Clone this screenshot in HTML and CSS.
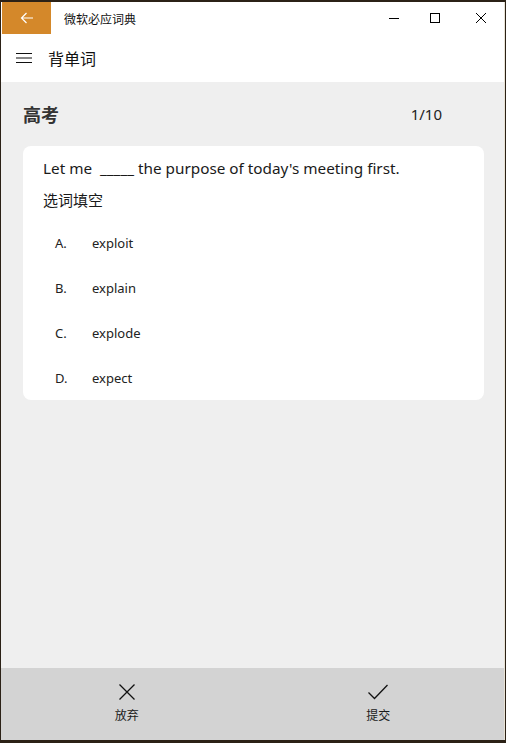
FILE: index.html
```html
<!DOCTYPE html>
<html lang="zh">
<head>
<meta charset="utf-8">
<title>微软必应词典</title>
<link rel="stylesheet" href="styles.css">
</head>
<body>
<div class="window">
  <div class="titlebar">
    <div class="back">
      <svg width="14" height="12" viewBox="0 0 14 12"><path d="M13 6H1.5M6.5 1L1.5 6l5 5" fill="none" stroke="#fff" stroke-width="1.2"/></svg>
    </div>
    <div class="apptitle">微软必应词典</div>
    <div class="controls">
      <span class="ctl ctl-min"><svg width="12" height="12" viewBox="0 0 12 12"><path d="M1 6.5h10" stroke="#000" stroke-width="1"/></svg></span>
      <span class="ctl"><svg width="12" height="12" viewBox="0 0 12 12"><rect x="1.5" y="1.5" width="9" height="9" fill="none" stroke="#000" stroke-width="1"/></svg></span>
      <span class="ctl"><svg width="12" height="12" viewBox="0 0 12 12"><path d="M1 1l10 10M11 1L1 11" stroke="#000" stroke-width="1"/></svg></span>
    </div>
  </div>
  <div class="navbar">
    <svg class="menu" width="16" height="12" viewBox="0 0 16 12"><path d="M0 1.5h16M0 6h16M0 10.5h16" stroke="#111" stroke-width="1.2"/></svg>
    <div class="navtitle">背单词</div>
  </div>
  <div class="content">
    <div class="head">
      <div class="cat">高考</div>
      <div class="count">1/10</div>
    </div>
    <div class="card">
      <div class="question">Let me &nbsp;_____ the purpose of today's meeting first.</div>
      <div class="qtype">选词填空</div>
      <div class="options">
        <div class="opt"><span class="letter">A.</span><span class="word">exploit</span></div>
        <div class="opt"><span class="letter">B.</span><span class="word">explain</span></div>
        <div class="opt"><span class="letter">C.</span><span class="word">explode</span></div>
        <div class="opt"><span class="letter">D.</span><span class="word">expect</span></div>
      </div>
    </div>
  </div>
  <div class="bottombar">
    <div class="action">
      <svg width="18" height="18" viewBox="0 0 18 18"><path d="M1.5 1.5l15 15M16.5 1.5l-15 15" stroke="#111" stroke-width="1.3"/></svg>
      <span class="label">放弃</span>
    </div>
    <div class="action">
      <svg width="22" height="18" viewBox="0 0 22 18"><path d="M1.5 9.5l6 6L20.5 2" fill="none" stroke="#111" stroke-width="1.3"/></svg>
      <span class="label">提交</span>
    </div>
  </div>
</div>
</body>
</html>
```

FILE: styles.css
```css
html, body {
  margin: 0;
  padding: 0;
  height: 100%;
}
body {
  background: #2b2116;
  font-family: "Noto Sans", "Noto Sans CJK SC", sans-serif;
  color: #1a1a1a;
}
.window {
  margin: 2px 1px 0 1px;
  height: 738px;
  display: flex;
  flex-direction: column;
  background: #efefef;
  border-right: 1px solid #e9e3d6;
  box-sizing: border-box;
}
.titlebar {
  height: 32px;
  background: #fff;
  display: flex;
  align-items: center;
}
.back {
  width: 49px;
  height: 32px;
  margin-left: 1px;
  background: #d4882a;
  display: flex;
  align-items: center;
  justify-content: center;
}
.apptitle {
  margin-left: 13px;
  font-size: 12px;
  font-family: "Noto Sans CJK SC", sans-serif;
  color: #111;
  flex: 1;
}
.controls {
  display: flex;
}
.ctl {
  width: 46px;
  display: flex;
  justify-content: center;
}
.ctl-min {
  width: 36px;
}
.navbar {
  height: 48px;
  background: #fff;
  display: flex;
  align-items: center;
}
.menu {
  margin-left: 15px;
}
.navtitle {
  margin-left: 16px;
  font-size: 16px;
  font-family: "Noto Sans CJK SC", sans-serif;
  color: #111;
}
.content {
  flex: 1;
  padding: 0 20px 0 22px;
}
.head {
  display: flex;
  align-items: center;
  justify-content: space-between;
  height: 64px;
}
.cat {
  font-family: "Noto Sans CJK SC", sans-serif;
  font-weight: bold;
  font-size: 18px;
  color: #333;
}
.count {
  font-size: 15px;
  margin-right: 42px;
  color: #222;
}
.card {
  background: #fff;
  border-radius: 8px;
  padding: 10px 20px 0 20px;
}
.question {
  font-size: 15.3px;
  line-height: 24px;
}
.qtype {
  font-family: "Noto Sans CJK SC", sans-serif;
  font-size: 15px;
  line-height: 24px;
  margin-top: 8px;
}
.options {
  margin-top: 8px;
}
.opt {
  height: 45px;
  display: flex;
  align-items: center;
  font-size: 13px;
  color: #222;
}
.letter {
  width: 37px;
  margin-left: 12px;
}
.bottombar {
  height: 72px;
  background: #d3d3d3;
  display: flex;
}
.action {
  flex: 1;
  display: flex;
  flex-direction: column;
  align-items: center;
  padding-top: 15px;
}
.label {
  font-family: "Noto Sans CJK SC", sans-serif;
  font-size: 12px;
  margin-top: 5px;
}
```
